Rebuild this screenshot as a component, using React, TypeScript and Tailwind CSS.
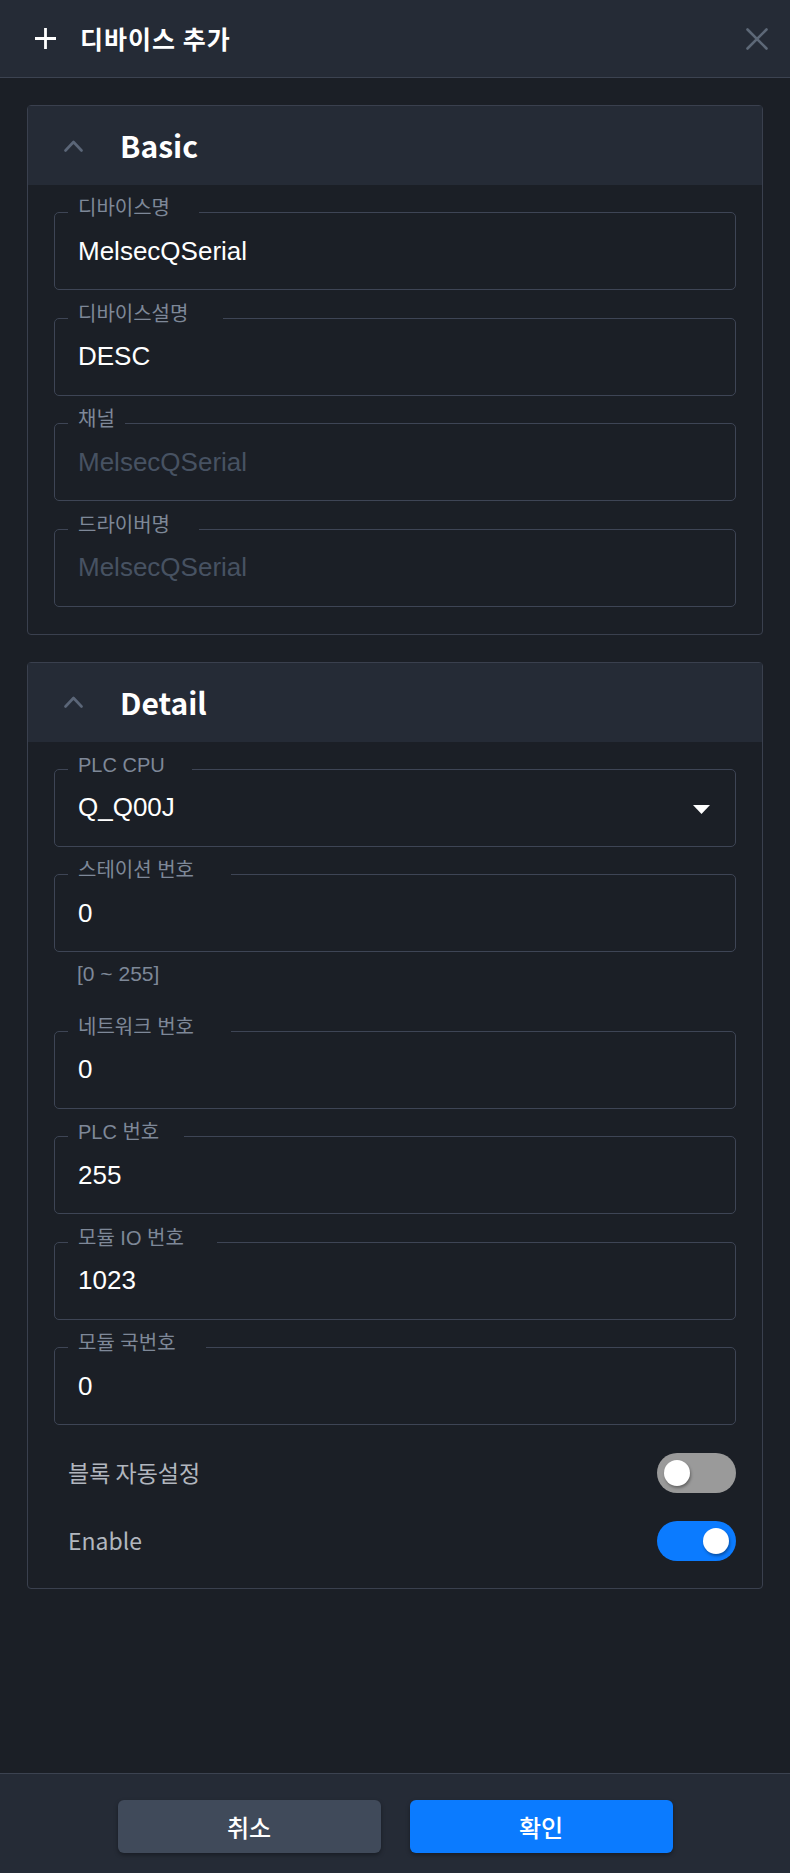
import React from "react";

type FieldProps = {
  label: string;
  value: string;
  disabled?: boolean;
  select?: boolean;
  helper?: string;
};

const Field = ({ label, value, disabled, select, helper }: FieldProps) => {
  return (
    <div>
      <div className="relative h-[78px]">
        {/* notched outline, the hidden legend cuts the gap for the label */}
        <fieldset className="pointer-events-none absolute inset-x-0 bottom-0 top-[-5px] m-0 rounded-[5px] border border-[#3e4555] px-[13px]">
          <legend className="invisible h-[11px] p-0 text-[26.67px] leading-[11px] whitespace-nowrap">
            <span className="px-[4px]">{label}</span>
          </legend>
        </fieldset>
        <span className="absolute left-[24px] top-[-14px] whitespace-nowrap text-[20px] leading-[20px] text-[#7e8898]">
          {label}
        </span>
        <div
          className={`flex h-full items-center justify-between pl-[24px] pr-[26px] text-[26px] ${
            disabled ? "text-[#475262]" : "text-white"
          }`}
        >
          <span>{value}</span>
          {select && (
            <svg width="17" height="9" viewBox="0 0 17 9" className="mt-[4px]">
              <polygon points="0,0 17,0 8.5,9" fill="#ffffff" />
            </svg>
          )}
        </div>
      </div>
      {helper && (
        <p className="mb-[17px] mt-[10px] pl-[23px] text-[21px] leading-[24px] text-[#7e8898]">
          {helper}
        </p>
      )}
    </div>
  );
};

const Toggle = ({ on }: { on: boolean }) => (
  <div
    className={`flex h-[40px] w-[79px] items-center rounded-full px-[7px] ${
      on ? "justify-end bg-[#0b7bff]" : "justify-start bg-[#9a9a9a]"
    }`}
  >
    <div className="h-[26px] w-[26px] rounded-full bg-white shadow-[1px_2px_3px_rgba(0,0,0,0.35)]" />
  </div>
);

const Section = ({ title, children }: { title: string; children: React.ReactNode }) => (
  <div className="rounded-[4px] border border-[#3a404e]">
    <div className="flex h-[79px] items-center bg-[#252b36] pl-[36px]">
      <svg width="19" height="12" viewBox="0 0 19 12" fill="none">
        <polyline
          points="1.5,10.5 9.5,2 17.5,10.5"
          stroke="#5b6678"
          strokeWidth="2.6"
          strokeLinecap="round"
          strokeLinejoin="round"
        />
      </svg>
      <h2 className="ml-[37px] font-['Noto_Sans_CJK_KR',sans-serif] text-[30px] font-bold text-white">
        {title}
      </h2>
    </div>
    <div className="flex flex-col gap-[27.5px] px-[26px] pb-[27px] pt-[27px]">{children}</div>
  </div>
);

export default function App() {
  return (
    <div className="flex h-[1873px] w-[790px] flex-col bg-[#1b1f26] font-['Liberation_Sans','Noto_Sans_CJK_KR',sans-serif]">
      {/* header */}
      <div className="flex h-[78px] shrink-0 items-center border-b border-[#3c4351] bg-[#252b36] pl-[34px] pr-[22px]">
        <svg width="23" height="23" viewBox="0 0 23 23">
          <path d="M11.5 1v21M1 11.5h21" stroke="#ffffff" strokeWidth="2.8" />
        </svg>
        <h1 className="ml-[23px] font-['Noto_Sans_CJK_KR',sans-serif] text-[25px] font-bold tracking-[1px] text-white">
          디바이스 추가
        </h1>
        <svg width="22" height="22" viewBox="0 0 22 22" className="ml-auto">
          <path d="M1.5 1.5l19 19M20.5 1.5l-19 19" stroke="#5d6877" strokeWidth="2.6" strokeLinecap="round" />
        </svg>
      </div>

      {/* body */}
      <div className="flex flex-1 flex-col gap-[27px] px-[27px] pt-[27px]">
        <Section title="Basic">
          <Field label="디바이스명" value="MelsecQSerial" />
          <Field label="디바이스설명" value="DESC" />
          <Field label="채널" value="MelsecQSerial" disabled />
          <Field label="드라이버명" value="MelsecQSerial" disabled />
        </Section>

        <Section title="Detail">
          <Field label="PLC CPU" value="Q_Q00J" select />
          <Field label="스테이션 번호" value="0" helper="[0 ~ 255]" />
          <Field label="네트워크 번호" value="0" />
          <Field label="PLC 번호" value="255" />
          <Field label="모듈 IO 번호" value="1023" />
          <Field label="모듈 국번호" value="0" />
          <div className="flex flex-col gap-[28px]">
            <div className="flex h-[40px] items-center justify-between pl-[14px]">
              <span className="font-['Noto_Sans_CJK_KR',sans-serif] text-[23px] text-[#b1b6be]">블록 자동설정</span>
              <Toggle on={false} />
            </div>
            <div className="flex h-[40px] items-center justify-between pl-[14px]">
              <span className="font-['Noto_Sans_CJK_KR',sans-serif] text-[23px] text-[#b1b6be]">Enable</span>
              <Toggle on />
            </div>
          </div>
        </Section>
      </div>

      {/* footer */}
      <div className="flex h-[100px] shrink-0 justify-center gap-[29px] border-t border-[#3c4351] bg-[#252b36] pt-[26px]">
        <button className="h-[53px] w-[263px] rounded-[6px] bg-[#404a5a] font-['Noto_Sans_CJK_KR',sans-serif] text-[24px] font-medium text-white shadow-[0_2px_4px_rgba(0,0,0,0.35)]">
          취소
        </button>
        <button className="h-[53px] w-[263px] rounded-[6px] bg-[#0b7bff] font-['Noto_Sans_CJK_KR',sans-serif] text-[24px] font-medium text-white shadow-[0_2px_4px_rgba(0,0,0,0.35)]">
          확인
        </button>
      </div>
    </div>
  );
}
